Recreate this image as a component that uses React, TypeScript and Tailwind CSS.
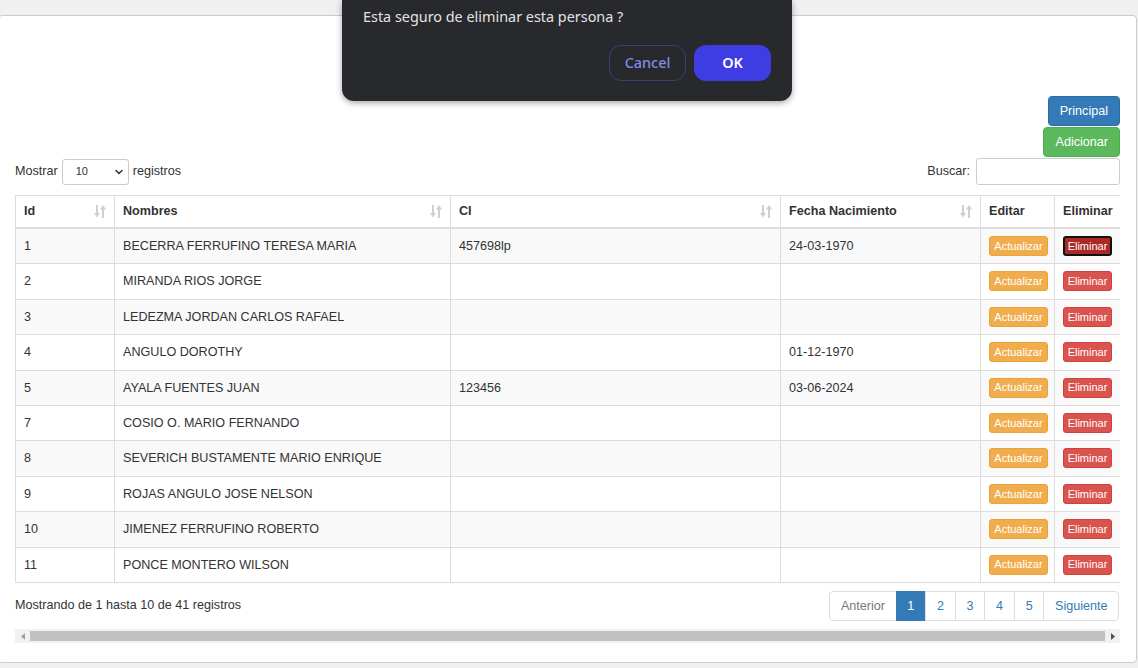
import { ChevronDown } from "lucide-react";

type Persona = {
  id: number;
  nombre: string;
  ci: string;
  fecha: string;
};

const personas: Persona[] = [
  { id: 1, nombre: "BECERRA FERRUFINO TERESA MARIA", ci: "457698lp", fecha: "24-03-1970" },
  { id: 2, nombre: "MIRANDA RIOS JORGE", ci: "", fecha: "" },
  { id: 3, nombre: "LEDEZMA JORDAN CARLOS RAFAEL", ci: "", fecha: "" },
  { id: 4, nombre: "ANGULO DOROTHY", ci: "", fecha: "01-12-1970" },
  { id: 5, nombre: "AYALA FUENTES JUAN", ci: "123456", fecha: "03-06-2024" },
  { id: 7, nombre: "COSIO O. MARIO FERNANDO", ci: "", fecha: "" },
  { id: 8, nombre: "SEVERICH BUSTAMENTE MARIO ENRIQUE", ci: "", fecha: "" },
  { id: 9, nombre: "ROJAS ANGULO JOSE NELSON", ci: "", fecha: "" },
  { id: 10, nombre: "JIMENEZ FERRUFINO ROBERTO", ci: "", fecha: "" },
  { id: 11, nombre: "PONCE MONTERO WILSON", ci: "", fecha: "" },
];

function SortIcon() {
  return (
    <svg width="12" height="13" viewBox="0 0 12 13" aria-hidden="true">
      <g fill="#cfcfcf">
        <rect x="2" y="0" width="2" height="9" />
        <path d="M0 8 L6 8 L3 12.5 Z" />
        <rect x="8" y="4" width="2" height="9" />
        <path d="M6 4.5 L12 4.5 L9 0 Z" />
      </g>
    </svg>
  );
}

function Th({ label, sort = true }: { label: string; sort?: boolean }) {
  return (
    <th className="border border-b-2 border-[#ddd] px-2 py-[6px] text-left font-bold leading-[19px]">
      <div className="flex items-center justify-between">
        <span>{label}</span>
        {sort && <SortIcon />}
      </div>
    </th>
  );
}

export default function App() {
  return (
    <div
      className="relative h-[668px] w-[1138px] overflow-hidden bg-[#f0f0f0] text-[12.6px] text-[#333]"
      style={{ fontFamily: '"Liberation Sans", Arial, sans-serif' }}
    >
      <div className="h-[15px]" />
      <div className="ml-[-2px] mr-[1px] h-[648px] rounded-[4px] border border-[#ccc] bg-white px-4 pt-[80px]">
        <div className="flex flex-col items-end gap-px">
          <button className="h-[30px] rounded-[4px] border border-[#2e6da4] bg-[#337ab7] px-[11px] text-[12.6px] text-white">
            Principal
          </button>
          <button className="h-[30px] rounded-[4px] border border-[#4cae4c] bg-[#5cb85c] px-[11px] text-[12.6px] text-white">
            Adicionar
          </button>
        </div>

        <div className="mt-px flex h-[27px] items-center justify-between">
          <div className="flex items-center gap-1">
            <span>Mostrar</span>
            <div className="flex h-[26px] w-[67px] items-center justify-between rounded-[3px] border border-[#ccc] pl-[13px] pr-[3px] text-[11px]">
              <span>10</span>
              <ChevronDown size={12} strokeWidth={3} />
            </div>
            <span>registros</span>
          </div>
          <div className="flex items-center gap-[6px]">
            <span>Buscar:</span>
            <div className="h-[27px] w-[144px] rounded-[3px] border border-[#ccc]" />
          </div>
        </div>

        <div className="mt-[10px] w-[1105px] overflow-hidden">
          <table className="w-[1114px] table-fixed border-collapse">
            <colgroup>
              <col className="w-[99px]" />
              <col className="w-[336px]" />
              <col className="w-[330px]" />
              <col className="w-[200px]" />
              <col className="w-[74px]" />
              <col className="w-[75px]" />
            </colgroup>
            <thead>
              <tr>
                <Th label="Id" />
                <Th label="Nombres" />
                <Th label="CI" />
                <Th label="Fecha Nacimiento" />
                <Th label="Editar" sort={false} />
                <Th label="Eliminar" sort={false} />
              </tr>
            </thead>
            <tbody>
              {personas.map((p, i) => (
                <tr key={p.id} className={i % 2 === 0 ? "bg-[#f9f9f9]" : "bg-white"}>
                  <td className="border border-[#ddd] px-2 py-2 align-top leading-[18.4px]">{p.id}</td>
                  <td className="border border-[#ddd] px-2 py-2 align-top leading-[18.4px]">{p.nombre}</td>
                  <td className="border border-[#ddd] px-2 py-2 align-top leading-[18.4px]">{p.ci}</td>
                  <td className="border border-[#ddd] px-2 py-2 align-top leading-[18.4px]">{p.fecha}</td>
                  <td className="border border-[#ddd] px-2 py-[7px] align-top">
                    <button className="flex h-[20px] w-[59px] items-center justify-center rounded-[3px] border border-[#eea236] bg-[#f0ad4e] text-[11px] text-white">
                      Actualizar
                    </button>
                  </td>
                  <td className="border border-[#ddd] px-2 py-[7px] align-top">
                    {i === 0 ? (
                      <button className="flex h-[20px] w-[49px] items-center justify-center rounded-[3px] border-2 border-[#111] bg-[#ac2925] text-[11px] text-white">
                        Eliminar
                      </button>
                    ) : (
                      <button className="flex h-[20px] w-[49px] items-center justify-center rounded-[3px] border border-[#d43f3a] bg-[#d9534f] text-[11px] text-white">
                        Eliminar
                      </button>
                    )}
                  </td>
                </tr>
              ))}
            </tbody>
          </table>
        </div>

        <div className="mt-[8px] flex items-start justify-between">
          <div className="pt-[5px]">Mostrando de 1 hasta 10 de 41 registros</div>
          <div className="mr-px flex h-[30px] text-[12.6px]">
            <span className="flex items-center rounded-l-[4px] border border-[#ddd] px-[10.5px] text-[#777]">Anterior</span>
            <span className="-ml-px flex w-[30.6px] items-center justify-center border border-[#337ab7] bg-[#337ab7] text-white">1</span>
            {["2", "3", "4", "5"].map((n) => (
              <span key={n} className="-ml-px flex w-[30.6px] items-center justify-center border border-[#ddd] text-[#337ab7]">
                {n}
              </span>
            ))}
            <span className="-ml-px flex items-center rounded-r-[4px] border border-[#ddd] px-[10.5px] text-[#337ab7]">Siguiente</span>
          </div>
        </div>

        <div className="mt-[8px] flex h-[14px] w-[1105px] items-center bg-[#f1f1f1]">
          <div className="flex w-[15px] justify-center">
            <svg width="4" height="7" viewBox="0 0 4 7" aria-hidden="true">
              <path d="M4 0 L0 3.5 L4 7 Z" fill="#a3a3a3" />
            </svg>
          </div>
          <div className="h-[10px] flex-1 bg-[#c1c1c1]" />
          <div className="flex w-[15px] justify-center">
            <svg width="4" height="7" viewBox="0 0 4 7" aria-hidden="true">
              <path d="M0 0 L4 3.5 L0 7 Z" fill="#505050" />
            </svg>
          </div>
        </div>
      </div>

      <div
        className="absolute left-[342px] top-0 w-[450px] rounded-b-[12px] bg-[#28292c] px-[21px] pb-[20px] pt-[6px] shadow-[0_2px_6px_rgba(0,0,0,0.35)]"
        style={{ fontFamily: '"Noto Sans", "Open Sans", sans-serif' }}
      >
        <p className="text-[14.4px] leading-[22px] text-[#e3e3e3]">Esta seguro de eliminar esta persona ?</p>
        <div className="mt-[17px] flex justify-end gap-2">
          <button className="h-[36px] w-[77px] rounded-[12px] border border-[#3b3f78] text-[14.4px] font-medium text-[#7f8de6]">
            Cancel
          </button>
          <button className="h-[36px] w-[77px] rounded-[12px] bg-[#3d3de3] text-[14.4px] font-semibold text-white">
            OK
          </button>
        </div>
      </div>
    </div>
  );
}
